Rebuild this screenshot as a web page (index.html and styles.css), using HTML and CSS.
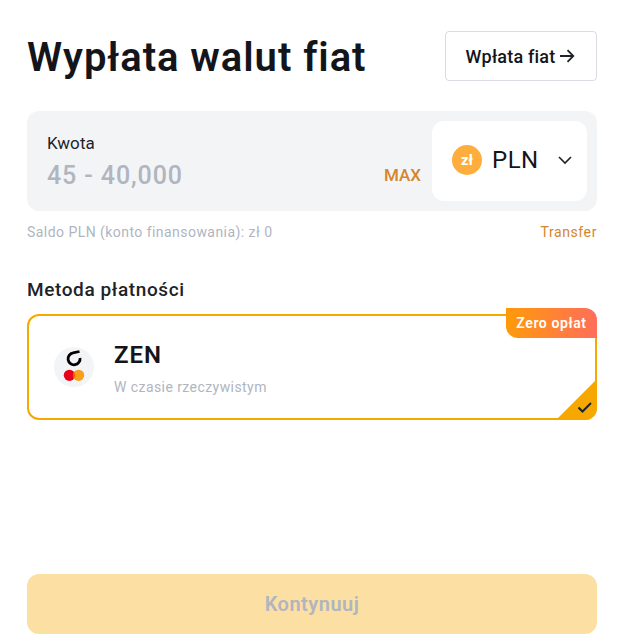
FILE: index.html
```html
<!DOCTYPE html>
<html lang="pl">
<head>
<meta charset="utf-8">
<title>Wypłata walut fiat</title>
<link rel="stylesheet" href="styles.css">
</head>
<body>
<main class="page">
  <header class="head">
    <h1 class="title">Wypłata walut fiat</h1>
    <a class="deposit">Wpłata fiat
      <svg class="deposit-arrow" width="18" height="18" viewBox="0 0 18 18"><path d="M2 9h13M9.5 3.2 15.3 9l-5.8 5.8" fill="none" stroke="#1e2329" stroke-width="1.8"/></svg>
    </a>
  </header>

  <section class="amount">
    <div class="amount-main">
      <div class="amount-label">Kwota</div>
      <div class="amount-value">45 - 40,000</div>
    </div>
    <span class="max">MAX</span>
    <div class="currency">
      <span class="coin">zł</span>
      <span class="code">PLN</span>
      <svg class="chev" width="16" height="10" viewBox="0 0 16 10"><path d="M2 2l6 6 6-6" fill="none" stroke="#1e2329" stroke-width="1.6"/></svg>
    </div>
  </section>

  <div class="balance">
    <span>Saldo PLN (konto finansowania): zł 0</span>
    <a class="transfer">Transfer</a>
  </div>

  <h2 class="method-title">Metoda płatności</h2>

  <section class="method">
    <span class="badge">Zero opłat</span>
    <div class="logo">
      <svg width="40" height="40" viewBox="0 0 40 40">
        <circle cx="20" cy="20" r="20" fill="#f3f4f6"/>
        <path d="M26 11A6 6 0 1 1 19 5.900L25.500 4.500" fill="none" stroke="#000" stroke-width="2.800"/>
        <circle cx="15.400" cy="28.300" r="5.600" fill="#eb001b"/>
        <circle cx="24.600" cy="28.300" r="5.600" fill="#f79e1b"/>
        <path d="M20 25a5.600 5.600 0 0 1 0 6.600a5.600 5.600 0 0 1 0-6.600z" fill="#ff5f00"/>
      </svg>
    </div>
    <div class="method-text">
      <div class="method-name">ZEN</div>
      <div class="method-sub">W czasie rzeczywistym</div>
    </div>
    <svg class="corner" width="41" height="41" viewBox="0 0 41 41">
      <path d="M41 0V41H0z" fill="#f6a800"/>
      <path d="M22.500 28.500l4 4L35 24" fill="none" stroke="#1e2329" stroke-width="2"/>
    </svg>
  </section>

  <button class="continue" type="button">Kontynuuj</button>
</main>
</body>
</html>
```

FILE: styles.css
```css
* { box-sizing: border-box; }
html, body { margin: 0; background: #fff; }
body { font-family: "Roboto", "Liberation Sans", sans-serif; color: #1e2329; }
.page {
  width: 623px;
  height: 643px;
  padding: 31px 26px 9px 27px;
  display: flex;
  flex-direction: column;
  overflow: hidden;
}
.head { display: flex; justify-content: space-between; align-items: center; height: 50px; }
.title { margin: 4px 0 0; font-size: 40px; line-height: 52px; font-weight: 600; color: #14151a; letter-spacing: 0.95px; }
.deposit {
  width: 152px; height: 50px;
  display: flex; align-items: center; justify-content: center; gap: 3px;
  border: 1px solid #d9dce3; border-radius: 4px;
  font-size: 18px; font-weight: 500; letter-spacing: 0.2px; color: #14151a;
}
.deposit-arrow { display: block; }
.amount {
  margin-top: 30px;
  height: 100px;
  background: #f3f4f6;
  border-radius: 12px;
  padding: 10px;
  display: flex;
  align-items: stretch;
}
.amount-main { flex: 1; padding: 10px 0 0 10px; }
.amount-label { font-size: 17px; line-height: 24px; color: #1e2329; letter-spacing: 0.1px; }
.amount-value { margin-top: 5px; font-size: 25px; line-height: 32px; font-weight: 500; color: #b0b5bf; letter-spacing: 0.9px; }
.max { align-self: center; margin: 27px 11px 0 0; font-size: 17px; font-weight: 500; line-height: 24px; color: #d4862c; }
.currency {
  width: 155px;
  background: #fff;
  border-radius: 12px;
  padding: 0 14px 2px 20px;
  display: flex;
  align-items: center;
}
.coin {
  width: 30px; height: 30px; border-radius: 50%;
  background: #ffae3d; color: #fff;
  font-size: 15px; font-weight: 700;
  display: flex; align-items: center; justify-content: center;
}
.code { margin-left: 10px; font-size: 24px; line-height: 32px; color: #14151a; letter-spacing: 0.5px; }
.chev { margin-left: auto; }
.balance {
  margin-top: 12px;
  display: flex; justify-content: space-between;
  font-size: 14px; line-height: 18px; color: #b0b5bf; letter-spacing: 0.45px;
}
.transfer { color: #d4862c; letter-spacing: 0.6px; }
.method-title { margin: 37px 0 0; font-size: 19px; line-height: 24px; font-weight: 500; color: #1e2329; letter-spacing: 0.6px; }
.method {
  position: relative;
  margin-top: 12px;
  height: 106px;
  border: 2px solid #f6a800;
  border-radius: 12px;
  padding: 0 0 0 25px;
  display: flex; align-items: center;
}
.logo { width: 40px; height: 40px; }
.logo svg { display: block; }
.method-text { margin: 1px 0 0 20px; }
.method-name { font-size: 24px; line-height: 32px; font-weight: 600; color: #14151a; letter-spacing: 1px; }
.method-sub { margin-top: 7px; font-size: 14px; line-height: 18px; color: #b0b5bf; letter-spacing: 0.43px; }
.badge {
  position: absolute; top: -8px; right: -2px;
  height: 30px; width: 91px;
  display: flex; align-items: center; justify-content: center;
  font-size: 14px; font-weight: 600; color: #fff; letter-spacing: 0.6px;
  background: linear-gradient(90deg, #ff9a0a, #ff6e5a);
  border-radius: 0 12px 0 12px;
}
.corner {
  position: absolute; right: -2px; bottom: -2px;
  border-bottom-right-radius: 12px;
}
.continue {
  margin-top: auto;
  height: 60px;
  border: 0;
  border-radius: 12px;
  background: #fcdfa3;
  font-family: inherit;
  font-size: 20px; font-weight: 600; letter-spacing: 0.5px;
  color: #b0b5bf;
}
```
